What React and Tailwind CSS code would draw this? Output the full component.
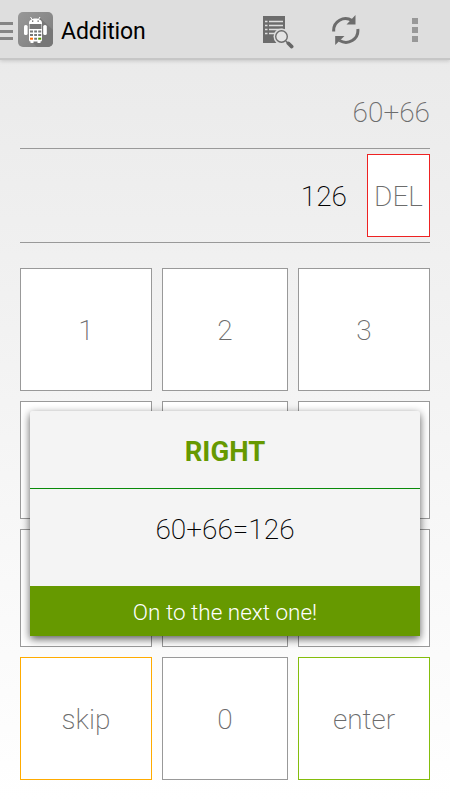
const keys = [
  { name: '1', label: '1' }, { name: '2', label: '2' }, { name: '3', label: '3' },
  { name: '4' }, { name: '5' }, { name: '6' },
  { name: '7' }, { name: '8' }, { name: '9' },
  { name: 'skip', label: 'skip', border: 'border-[#ffab00]' },
  { name: '0', label: '0' },
  { name: 'enter', label: 'enter', border: 'border-[#84bd0c]' },
];

function AppIcon() {
  return (
    <svg className="ml-[5px] h-[35px] w-[35px] shrink-0" viewBox="0 0 35 35">
      <defs>
        <linearGradient id="tile" x1="0" y1="0" x2="1" y2="1">
          <stop offset="0" stopColor="#989898" />
          <stop offset="1" stopColor="#7c7c7c" />
        </linearGradient>
      </defs>
      <rect width="35" height="35" rx="5" fill="url(#tile)" />
      <path d="M22 6 35 18V30a5 5 0 0 1-5 5H19L12 28Z" fill="#777" />
      <path d="m12.5 5 2 3M22 5l-2 3" stroke="#fff" strokeWidth="1" />
      <path d="M11 11c0-6 13-6 13 0v17a1.5 1.5 0 0 1-1.5 1.5V31h-3v-1.5h-4V31h-3v-1.5A1.5 1.5 0 0 1 11 28Z" fill="#fff" />
      <rect x="6" y="13" width="3.6" height="10" rx="1.6" fill="#fff" />
      <rect x="25.2" y="13" width="3.6" height="10" rx="1.6" fill="#fff" />
      <path d="M14 8.5h1.3v1.3H14zM19.5 8.5h1.3v1.3h-1.3z" fill="#555" />
      <path d="M11.5 12h12v5h-12z" fill="#777" />
      <path d="M12 18.5h3v2h-3zM16.2 18.5h2.8v2h-2.8zM20.2 18.5h3v2h-3zM12 22h3v2h-3zM16.2 22h2.8v2h-2.8zM20.2 22h3v2h-3zM16.2 25.7h2.8v2h-2.8z" fill="#777" />
      <path d="M12 25.7h3v2h-3z" fill="#ff6a00" />
      <path d="M20.2 25.7h3v2h-3z" fill="#559600" />
    </svg>
  );
}

function LogIcon() {
  return (
    <svg className="h-[34px] w-[31px]" viewBox="0 0 31 34">
      <path d="M0 0h22v27H0z" fill="#6c6c6c" />
      <path d="M2 5.5h2.5M6 5.5h14M2 9.5h2.5M6 9.5h14M2 13.5h2.5M6 13.5h14M2 17.5h2.5M6 17.5h8" stroke="#dedede" strokeWidth="1.3" />
      <circle cx="18.5" cy="20.5" r="8" fill="#dedede" />
      <circle cx="18.5" cy="20.5" r="5.8" fill="#e4e4e4" stroke="#6c6c6c" strokeWidth="1.4" />
      <path d="m22.8 25 2.5 2.5" stroke="#6c6c6c" strokeWidth="1.5" />
      <path d="m25.3 27.3 3.4 3.3" stroke="#666" strokeWidth="3.6" strokeLinecap="round" />
    </svg>
  );
}

function RefreshIcon() {
  return (
    <svg className="ml-[38px] h-[30px] w-[28px]" viewBox="0 0 28 30">
      <g fill="none" stroke="#6c6c6c" strokeWidth="3">
        <path d="M1.7 16.5C1 6 12 .5 20 5.5" />
        <path d="M25.8 14C27 24.5 16 30.5 7.5 25.5" />
      </g>
      <path d="M23.5 0v9.500H14.500Z" fill="#6c6c6c" />
      <path d="M3.200 30V21H12.500Z" fill="#6c6c6c" />
    </svg>
  );
}

function Header() {
  return (
    <header className="flex h-[60px] items-start border-b-2 border-[#c6c6c6] bg-[#dedede] shadow-[0_1px_4px_rgba(0,0,0,0.16)]">
      <div className="mt-[22px] flex w-[13px] flex-col gap-[4.5px]">
        <div className="h-[3px] bg-[#858585]" />
        <div className="h-[3px] bg-[#858585]" />
        <div className="h-[3px] bg-[#858585]" />
      </div>
      <div className="mt-3 flex h-[35px] items-center">
        <AppIcon />
        <h1 className="ml-[8px] pt-[5px] text-[23px] leading-[32px] font-normal tracking-[-0.1px] text-black">Addition</h1>
      </div>
      <div className="ml-auto mr-[32px] flex">
        <div className="mt-4"><LogIcon /></div>
        <div className="mt-[15px]"><RefreshIcon /></div>
        <div className="mt-[18px] ml-[52px] flex flex-col gap-[3px]">
          <div className="size-[6px] bg-[#989898]" />
          <div className="size-[6px] bg-[#989898]" />
          <div className="size-[6px] bg-[#989898]" />
        </div>
      </div>
    </header>
  );
}

function ResultDialog() {
  return (
    <section className="absolute top-[411px] left-[30px] flex h-[225px] w-[390px] flex-col overflow-hidden rounded-t-[2px] bg-[#f4f4f4] text-center shadow-[0_3px_9px_rgba(0,0,0,0.65)]">
      <h2 className="h-[78px] border-b border-[#098a09] pt-[24px] text-[27.5px] leading-[34px] font-bold text-[#669900]">RIGHT</h2>
      <p className="h-[97px] pt-[24px] text-[28px] leading-[34px] font-extralight text-black">60+66=126</p>
      <button className="h-[50px] bg-[#669900] pt-[2px] text-[22.5px] leading-[30px] font-light text-white">On to the next one!</button>
    </section>
  );
}

export default function App() {
  return (
    <div className="relative h-[800px] w-[450px] overflow-hidden bg-linear-to-b from-[#e9e9e9] to-white font-['Roboto',sans-serif] antialiased">
      <Header />
      <main className="px-5">
        <div className="h-[89px] border-b border-[#999] pt-[37px] text-right text-[28px] leading-[32px] font-extralight text-[#6c6c6c]">60+66</div>
        <div className="flex h-[94px] items-start justify-end border-b border-[#999] pt-[5px]">
          <output className="mr-5 pt-[26px] text-[28px] leading-[34px] font-extralight text-black">126</output>
          <button className="h-[83px] w-[63px] border border-[#ee2222] bg-white pt-[2px] text-[28px] font-extralight text-[#6c6c6c]">DEL</button>
        </div>
        <div className="mt-[25px] grid grid-cols-[132px_126px_132px] grid-rows-[123px_118px_118px_123px] gap-[10px]">
          {keys.map((key) => (
            <button key={key.name} aria-label={key.name} className={`border bg-white pt-[2px] text-[28px] font-extralight text-[#6c6c6c] ${key.border || 'border-[#999]'}`}>{key.label}</button>
          ))}
        </div>
      </main>
      <ResultDialog />
    </div>
  );
}
